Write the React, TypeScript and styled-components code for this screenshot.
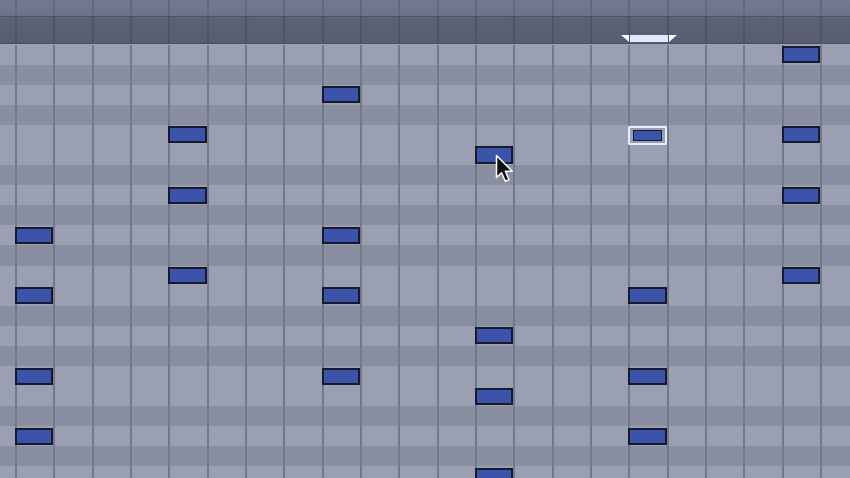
import React from 'react'
import styled, { createGlobalStyle } from 'styled-components';

const COL = 38.333;
const ROW = 20.1;
const COLS = 23;
const ROWS = 22;

// keyboard pattern from the top row down (E, D#, D, C#, C, B, A#, A, G#, G, F#, F)
const BLACK = [false, true, false, true, false, false, true, false, true, false, true, false];

type NoteData = { col: number; row: number; selected?: boolean };

const notes: NoteData[] = [
  { col: 0, row: 9 }, { col: 0, row: 12 }, { col: 0, row: 16 }, { col: 0, row: 19 },
  { col: 4, row: 4 }, { col: 4, row: 7 }, { col: 4, row: 11 },
  { col: 8, row: 2 }, { col: 8, row: 9 }, { col: 8, row: 12 }, { col: 8, row: 16 },
  { col: 12, row: 5 }, { col: 12, row: 14 }, { col: 12, row: 17 }, { col: 12, row: 21 },
  { col: 16, row: 4, selected: true }, { col: 16, row: 12 }, { col: 16, row: 16 }, { col: 16, row: 19 },
  { col: 20, row: 0 }, { col: 20, row: 4 }, { col: 20, row: 7 }, { col: 20, row: 11 },
];

const App = () => {
  const cols = Array.from({ length: COLS }, (_, i) => i);
  const rows = Array.from({ length: ROWS }, (_, i) => i);
  return (
    <>
      <Global />
      <Frame>
        <TopStrip>
          <Ticks>
            {cols.map((c) => <Tick key={c} $color="#62677c" />)}
          </Ticks>
        </TopStrip>
        <Band>
          <Ticks>
            {cols.map((c) => <Tick key={c} $color="#4f5367" />)}
          </Ticks>
          <LoopMarker width="56" height="8" viewBox="0 0 56 8">
            <polygon points="0,0 8,0 8,7 " fill="#f4f9fd" />
            <rect x="9" y="0" width="38" height="7" fill="#dcecf8" />
            <polygon points="48,0 56,0 48,7" fill="#f4f9fd" />
          </LoopMarker>
        </Band>
        <Roll>
          {rows.map((r) => (
            <Lane key={'l' + r} $row={r} $black={BLACK[r % 12]} />
          ))}
          {cols.map((c) => (
            <GridLine key={'g' + c} $col={c} />
          ))}
          {notes.map((n, i) =>
            n.selected ? (
              <SelectedNote key={i} $col={n.col} $row={n.row}>
                <SelectedInner />
              </SelectedNote>
            ) : (
              <Note key={i} $col={n.col} $row={n.row} />
            )
          )}
        </Roll>
        <Cursor width="20" height="30" viewBox="0 0 20 30">
          <path
            d="M1.5 1.5 L1.5 23.5 L6.6 18.7 L10.3 27.3 L14 25.7 L10.4 17.3 L17.3 17.3 Z"
            fill="#111"
            stroke="#fff"
            strokeWidth="1.5"
            strokeLinejoin="round"
          />
        </Cursor>
      </Frame>
    </>
  )
}

export default App;

const Global = createGlobalStyle`
body {
  margin: 0;
  background: #9a9eb1;
  font-family: "Liberation Sans", Arial, sans-serif;
}
`
const Frame = styled.div`
position: relative;
width: 850px;
height: 478px;
overflow: hidden;
display: flex;
flex-direction: column;
background-color: #9a9eb1;
`
const TopStrip = styled.div`
height: 16px;
flex-shrink: 0;
background: linear-gradient(#747990, #6d7288);
overflow: hidden;
`
const Band = styled.div`
position: relative;
height: 26px;
flex-shrink: 0;
background: linear-gradient(#5e6277, #585c71);
border-top: 1px solid #4c5064;
border-bottom: 1px solid #4a4e61;
overflow: hidden;
`
const Ticks = styled.div`
display: grid;
grid-template-columns: repeat(${COLS}, ${COL}px);
margin-left: -${COL - 15}px;
height: 100%;
`
const Tick = styled.div<{ $color: string }>`
border-left: 2px solid ${(p) => p.$color};
`
const LoopMarker = styled.svg`
position: absolute;
left: 621px;
bottom: 0;
`
const Roll = styled.div`
display: grid;
grid-template-columns: repeat(${COLS}, ${COL}px);
grid-template-rows: repeat(${ROWS}, ${ROW}px);
margin-left: -${COL - 15}px;
margin-top: 0.5px;
`
const Lane = styled.div<{ $row: number; $black: boolean }>`
grid-column: 1 / -1;
grid-row: ${(p) => p.$row + 1};
background-color: ${(p) => (p.$black ? '#8a8ea1' : '#9b9fb2')};
`
const GridLine = styled.div<{ $col: number }>`
grid-column: ${(p) => p.$col + 1};
grid-row: 1 / -1;
border-left: 2px solid #74788b;
`
const Note = styled.div<{ $col: number; $row: number }>`
grid-column: ${(p) => p.$col + 2};
grid-row: ${(p) => p.$row + 1};
margin: 1.5px 0 1.5px 0;
background-color: #3b54a9;
border: 2px solid #161a2c;
`
const SelectedNote = styled.div<{ $col: number; $row: number }>`
grid-column: ${(p) => p.$col + 2};
grid-row: ${(p) => p.$row + 1};
margin: 1px 0 0 -0.5px;
border: 2.5px solid #e3f0f9;
border-radius: 1px;
background-color: #9a9eb1;
padding: 1px;
display: flex;
`
const SelectedInner = styled.div`
flex: 1;
background-color: #3b54a9;
border: 1.5px solid #161a2c;
margin: 1px 2px;
`
const Cursor = styled.svg`
position: absolute;
left: 495px;
top: 154px;
`
